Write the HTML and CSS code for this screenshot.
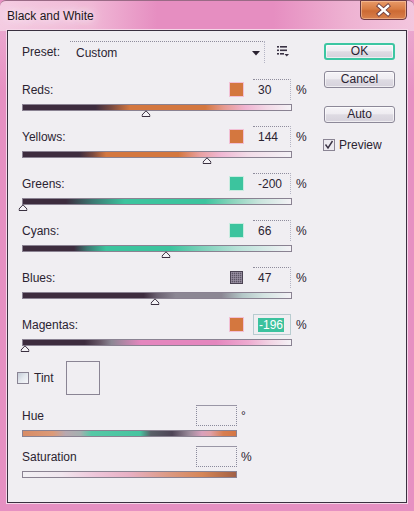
FILE: index.html
```html
<!DOCTYPE html>
<html>
<head>
<meta charset="utf-8">
<title>Black and White</title>
<link rel="stylesheet" href="styles.css">
</head>
<body>
<div class="window">
  <div class="titlebar">
    <span class="title">Black and White</span>
    <div class="close">
      <svg width="45" height="19" viewBox="0 0 45 19">
        <path d="M18 5 L27 13 M27 5 L18 13" stroke="#6a3a40" stroke-width="4.2" stroke-linecap="square"/>
        <path d="M18 5 L27 13 M27 5 L18 13" stroke="#ffffff" stroke-width="2.4" stroke-linecap="square"/>
      </svg>
    </div>
  </div>
  <div class="client">
    <div class="main">
      <div class="preset">
        <span class="preset-lbl">Preset:</span>
        <div class="dropdown">
          <span>Custom</span>
          <svg width="8" height="5" viewBox="0 0 8 5"><path d="M0 0 H8 L4 4.5 Z" fill="#2b2331"/></svg>
        </div>
        <svg class="listicon" width="12" height="12" viewBox="0 0 12 12">
          <rect x="0" y="1" width="2" height="1.6" fill="#3a3244"/>
          <rect x="3" y="1" width="7" height="1.6" fill="#3a3244"/>
          <rect x="0" y="4.5" width="2" height="1.6" fill="#3a3244"/>
          <rect x="3" y="4.5" width="7" height="1.6" fill="#3a3244"/>
          <rect x="0" y="8" width="2" height="1.6" fill="#3a3244"/>
          <rect x="3" y="8" width="4" height="1.6" fill="#3a3244"/>
          <path d="M7.5 9 H12 L9.75 11.5 Z" fill="#3a3244"/>
        </svg>
      </div>

      <div class="row">
        <div class="row-top">
          <span class="lbl">Reds:</span>
          <span class="swatch sw-orange"></span>
          <span class="num">30</span>
          <span class="pct">%</span>
        </div>
        <div class="bar bar-reds"><svg class="thumb" style="left:46%" width="9" height="7" viewBox="0 0 9 7"><path d="M0.5 6.5 V5 L4.5 0.8 L8.5 5 V6.5 Z" fill="#f4f2f6" stroke="#3a3040"/></svg></div>
      </div>

      <div class="row">
        <div class="row-top">
          <span class="lbl">Yellows:</span>
          <span class="swatch sw-orange"></span>
          <span class="num">144</span>
          <span class="pct">%</span>
        </div>
        <div class="bar bar-yellows"><svg class="thumb" style="left:68.8%" width="9" height="7" viewBox="0 0 9 7"><path d="M0.5 6.5 V5 L4.5 0.8 L8.5 5 V6.5 Z" fill="#f4f2f6" stroke="#3a3040"/></svg></div>
      </div>

      <div class="row">
        <div class="row-top">
          <span class="lbl">Greens:</span>
          <span class="swatch sw-green"></span>
          <span class="num">-200</span>
          <span class="pct">%</span>
        </div>
        <div class="bar bar-greens"><svg class="thumb" style="left:0%" width="9" height="7" viewBox="0 0 9 7"><path d="M0.5 6.5 V5 L4.5 0.8 L8.5 5 V6.5 Z" fill="#f4f2f6" stroke="#3a3040"/></svg></div>
      </div>

      <div class="row">
        <div class="row-top">
          <span class="lbl">Cyans:</span>
          <span class="swatch sw-green"></span>
          <span class="num">66</span>
          <span class="pct">%</span>
        </div>
        <div class="bar bar-cyans"><svg class="thumb" style="left:53.2%" width="9" height="7" viewBox="0 0 9 7"><path d="M0.5 6.5 V5 L4.5 0.8 L8.5 5 V6.5 Z" fill="#f4f2f6" stroke="#3a3040"/></svg></div>
      </div>

      <div class="row">
        <div class="row-top">
          <span class="lbl">Blues:</span>
          <span class="swatch sw-grid"></span>
          <span class="num">47</span>
          <span class="pct">%</span>
        </div>
        <div class="bar bar-blues"><svg class="thumb" style="left:49.4%" width="9" height="7" viewBox="0 0 9 7"><path d="M0.5 6.5 V5 L4.5 0.8 L8.5 5 V6.5 Z" fill="#f4f2f6" stroke="#3a3040"/></svg></div>
      </div>

      <div class="row">
        <div class="row-top">
          <span class="lbl">Magentas:</span>
          <span class="swatch sw-orange"></span>
          <span class="num num-active"><span class="sel">-196</span></span>
          <span class="pct">%</span>
        </div>
        <div class="bar bar-magentas"><svg class="thumb" style="left:0.8%" width="9" height="7" viewBox="0 0 9 7"><path d="M0.5 6.5 V5 L4.5 0.8 L8.5 5 V6.5 Z" fill="#f4f2f6" stroke="#3a3040"/></svg></div>
      </div>

      <div class="tint">
        <span class="check check-tint"></span>
        <span class="tint-lbl">Tint</span>
        <span class="tint-box"></span>
      </div>

      <div class="hs">
        <div class="hs-top">
          <span class="hs-lbl">Hue</span>
          <span class="box"></span>
          <span class="unit">°</span>
        </div>
        <div class="bar bar-hue"></div>
      </div>

      <div class="hs hs-sat">
        <div class="hs-top">
          <span class="hs-lbl">Saturation</span>
          <span class="box"></span>
          <span class="unit">%</span>
        </div>
        <div class="bar bar-sat"></div>
      </div>
    </div>

    <div class="side">
      <div class="btn btn-ok">OK</div>
      <div class="btn btn-cancel">Cancel</div>
      <div class="btn btn-auto">Auto</div>
      <div class="preview">
        <span class="check check-on">
          <svg width="10" height="10" viewBox="0 0 10 10"><path d="M1.5 4.5 L4 8 L8.5 1" fill="none" stroke="#3a3244" stroke-width="1.4"/></svg>
        </span>
        <span class="preview-lbl">Preview</span>
      </div>
    </div>
  </div>
</div>
</body>
</html>
```
FILE: styles.css
```css
* { box-sizing: border-box; }
html, body { margin: 0; padding: 0; }
body {
  font-family: "Liberation Sans", Arial, sans-serif;
  font-size: 12px;
  color: #2b2331;
  background: #e690c2;
}
.window {
  width: 414px;
  height: 511px;
  padding: 0 7px 8px 7px;
  display: flex;
  flex-direction: column;
  background:
    linear-gradient(to right, #f4cce2 0%, #f0b8d6 22%, #e68ec1 38%, #e68ec1 66%, #eeb2d2 84%, #f3c6de 100%) top left / 100% 30px no-repeat,
    linear-gradient(to bottom, #eaa6ce 30px, #e690c2 90px);
  border-top: 1px solid #9a6a86;
  border-radius: 6px 6px 0 0;
}
.titlebar {
  height: 29px;
  display: flex;
  justify-content: space-between;
  align-items: flex-start;
}
.title {
  margin-top: 8px;
  line-height: 14px;
  color: #1c1820;
  text-shadow: 0 0 6px #fae4f0, 0 0 10px #fae4f0, 0 0 14px #fae4f0;
}
.close {
  width: 47px;
  height: 20px;
  margin-top: -1px;
  border: 1px solid #6a3a42;
  border-radius: 0 0 4px 4px;
  background: linear-gradient(to bottom, #e89a68 0%, #d87c44 45%, #cc6a34 55%, #d8804c 100%);
  box-shadow: inset 0 0 0 1px rgba(255, 210, 180, 0.5);
  display: flex;
  align-items: center;
  justify-content: center;
}
.close svg { display: block; }
.client {
  flex: 1;
  border: 1px solid #3a3040;
  background: #f0eef2;
  display: flex;
  padding: 10px 0 0 14px;
  box-shadow: 0 0 0 1px #f6d6e8;
}
.main { width: 286px; }
.preset {
  display: flex;
  align-items: center;
  height: 22px;
  margin-bottom: 16px;
}
.preset-lbl { width: 48px; }
.dropdown {
  width: 195px;
  height: 22px;
  border-top: 1px dotted #8e8c9c;
  border-right: 1px dotted #b4b4c4;
  display: flex;
  align-items: center;
  justify-content: space-between;
  padding: 0 4px 0 6px;
}
.dropdown svg { display: block; margin-top: 1px; }
.listicon { display: block; margin-left: 12px; margin-top: -2px; }

.row { height: 47px; }
.row-top {
  display: flex;
  align-items: center;
  height: 21px;
}
.lbl { flex: 1; }
.swatch {
  width: 13px;
  height: 13px;
  margin-right: 10px;
}
.sw-orange { background: #d4773f; box-shadow: 0 0 0 1px #f2c0d6; }
.sw-green { background: #3cc49e; box-shadow: 0 0 0 1px #c8ece0; }
.sw-grid {
  background-color: #5c5464;
  background-image:
    linear-gradient(90deg, rgba(170,160,180,.55) 1px, transparent 1px),
    linear-gradient(rgba(170,160,180,.55) 1px, transparent 1px);
  background-size: 2px 2px;
  border: 1px solid #4a4252;
}
.num {
  width: 38px;
  height: 21px;
  border-top: 1px dotted #8e8c9c;
  border-right: 1px dotted #b4b4c4;
  padding-left: 5px;
  line-height: 20px;
}
.num-active {
  border: 1px solid #b8ccd0;
  padding-left: 4px;
  display: flex;
  align-items: center;
}
.sel {
  background: #3cc29e;
  color: #ffffff;
  line-height: 14px;
  padding: 0 1px;
}
.pct { width: 12px; margin-left: 5px; }

.bar {
  position: relative;
  width: 270px;
  height: 7px;
  margin-top: 4px;
  border: 1px solid #8a8292;
}
.thumb {
  position: absolute;
  top: 100%;
  display: block;
  transform: translateX(-50%);
}
.bar-reds {
  background: linear-gradient(to right, #3d2c3e 0%, #3d2c3e 27%, #7a4a40 33%, #d4773f 40%, #d4773f 68%, #e69a90 75%, #f0b4d2 83%, #f2d8e6 91%, #f4f2f6 100%);
}
.bar-yellows {
  background: linear-gradient(to right, #3d2c3e 0%, #3d2c3e 21%, #7a4a40 26%, #d4773f 31%, #d4773f 58%, #e8a0a0 66%, #f0b8d4 74%, #f2dce8 84%, #f4f2f6 100%);
}
.bar-greens {
  background: linear-gradient(to right, #3d2c3e 0%, #3d2c3e 16%, #3c7872 26%, #3cc49e 38%, #3cc49e 68%, #8ad4bc 78%, #c8e4dc 88%, #f4f2f6 100%);
}
.bar-cyans {
  background: linear-gradient(to right, #3d2c3e 0%, #3d2c3e 19%, #3c7872 24%, #3cc49e 31%, #3cc49e 55%, #78d0b8 66%, #b8e2d8 80%, #f4f2f6 100%);
}
.bar-blues {
  background: linear-gradient(to right, #3d2c3e 0%, #3d2c3e 45%, #6a6070 50%, #8c8794 57%, #8c8794 74%, #b4c8c8 82%, #d4e4e2 90%, #f4f2f6 100%);
}
.bar-magentas {
  background: linear-gradient(to right, #3d2c3e 0%, #3d2c3e 23%, #6a5a6a 29%, #8c8794 33%, #e486be 44%, #e486be 72%, #eeaad0 84%, #f2d4e4 92%, #f4f2f6 100%);
}

.tint {
  display: flex;
  align-items: center;
  height: 34px;
}
.check {
  width: 12px;
  height: 12px;
  border: 1px solid #8a8494;
  display: flex;
  align-items: center;
  justify-content: center;
}
.check-tint {
  margin-left: -5px;
  background: linear-gradient(135deg, #c4ccd8 0%, #e4e8ee 50%, #f6f6fa 100%);
}
.tint-lbl { margin-left: 5px; width: 22px; }
.tint-box {
  width: 34px;
  height: 34px;
  margin-left: 10px;
  border: 1px solid #8a8494;
}

.hs { margin-top: 10px; }
.hs-sat { margin-top: 9px; }
.hs-top {
  display: flex;
  align-items: center;
  height: 21px;
}
.hs-lbl { width: 174px; }
.box {
  width: 41px;
  height: 21px;
  border: 1px dotted #8a8a9c;
  border-top: 1px solid #9a96a6;
}
.unit { margin-left: 4px; }
.bar-hue {
  width: 215px;
  background: linear-gradient(to right, #d88c66 0%, #dc9a78 14%, #b8a8b0 20%, #a4b0b0 27%, #56c8a6 32%, #46c4a0 55%, #5a6068 60%, #4e4456 70%, #9a8a9a 78%, #d8a0bc 84%, #e0a0a8 88%, #d87e50 94%, #d47644 100%);
}
.bar-sat {
  width: 215px;
  background: linear-gradient(to right, #f2f0f4 0%, #f0e6ee 18%, #eec6da 34%, #e8b0c4 50%, #dc9a84 68%, #d68658 84%, #b06a48 96%, #a06048 100%);
}

.side {
  margin-left: 15px;
  padding-top: 2px;
  width: 72px;
  display: flex;
  flex-direction: column;
}
.btn {
  width: 71px;
  height: 17px;
  margin-left: 1px;
  border: 1px solid #8c8898;
  border-radius: 3px;
  background: linear-gradient(to bottom, #f6f4f8 0%, #eeecf1 45%, #dedbe3 52%, #d6d2dc 100%);
  box-shadow: inset 0 0 0 1px rgba(255,255,255,.6);
  text-align: center;
  line-height: 15px;
}
.btn-ok {
  border: 2px solid #3cc6a2;
  line-height: 13px;
}
.btn-cancel { margin-top: 11px; }
.btn-auto { margin-top: 18px; }
.preview {
  display: flex;
  align-items: center;
  margin-top: 15px;
  height: 13px;
}
.check-on { background: #eceaf0; }
.check-on svg { display: block; }
.preview-lbl { margin-left: 4px; }
```
